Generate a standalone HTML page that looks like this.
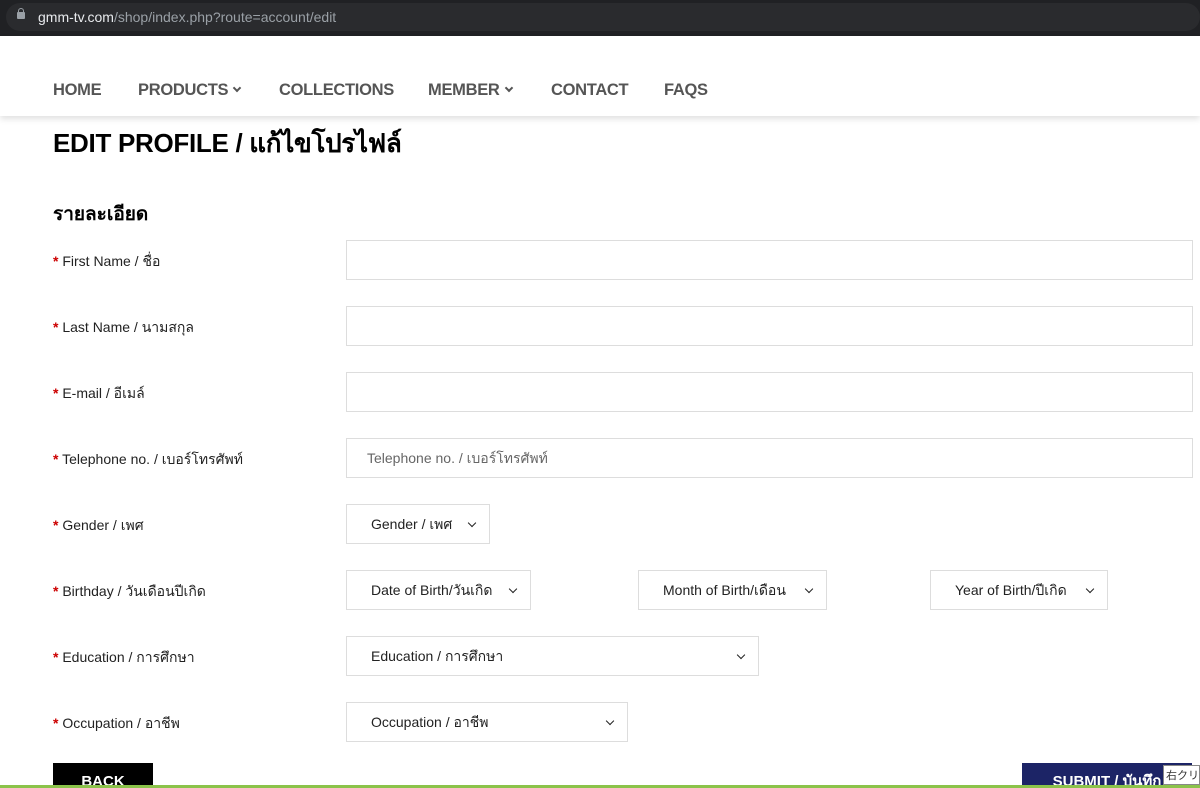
<!DOCTYPE html>
<html><head><meta charset="utf-8"><style>
*{box-sizing:border-box;margin:0;padding:0}
body{width:1200px;height:788px;overflow:hidden;background:#fff;font-family:"Liberation Sans",sans-serif;position:relative;color:#111}
.abs{position:absolute}
.bar{left:0;top:0;width:1200px;height:36px;background:#202124}
.url{left:6px;top:3px;width:1194px;height:28px;background:#2a2b2e;border-radius:14px;color:#9aa0a6;font-size:14px;line-height:28px;padding-left:32px}
.url b{color:#e8eaed;font-weight:normal}
.lock{left:17px;top:12px;width:8px;height:7px;background:#9aa0a6;border-radius:1px}
.lock:before{content:"";position:absolute;left:1px;top:-4px;width:4px;height:4px;border:1px solid #9aa0a6;border-bottom:none;border-radius:3px 3px 0 0}
.nav{left:0;top:36px;width:1200px;height:80px;background:#fff;box-shadow:0 3px 6px rgba(0,0,0,.12)}
.nav span{position:absolute;top:44px;font-size:16.5px;font-weight:bold;color:#555;line-height:20px;letter-spacing:-0.3px}
.chev{display:inline-block;width:6px;height:6px;border-right:2.5px solid #555;border-bottom:2.5px solid #555;transform:rotate(45deg);margin-left:6px;vertical-align:4px}
h1{position:absolute;left:53px;top:123px;font-size:26px;font-weight:bold;color:#000;letter-spacing:-0.3px}
h2{position:absolute;left:53px;top:199px;font-size:19px;font-weight:bold;color:#000}
.lbl{position:absolute;left:53px;font-size:14px;color:#222}
.lbl i{color:#c00;font-style:normal;font-weight:bold}
.inp{position:absolute;height:40px;border:1px solid #ddd;background:#fff;font-size:14px;color:#222;line-height:38px;padding-left:24px}
.sel:after{content:"";position:absolute;right:14px;top:15px;width:5px;height:5px;border-right:1.8px solid #222;border-bottom:1.8px solid #222;transform:rotate(45deg)}
.btn{position:absolute;top:763px;height:25px;color:#fff;font-weight:bold;font-size:15px;text-align:center;line-height:38px;overflow:hidden}
</style></head><body>
<div class="abs bar"></div>
<div class="abs url"><b>gmm-tv.com</b>/shop/index.php?route=account/edit</div>
<div class="abs lock"></div>
<div class="abs nav">
<span style="left:53px">HOME</span>
<span style="left:138px">PRODUCTS<i class="chev"></i></span>
<span style="left:279px">COLLECTIONS</span>
<span style="left:428px">MEMBER<i class="chev"></i></span>
<span style="left:551px">CONTACT</span>
<span style="left:664px">FAQS</span>
</div>
<h1>EDIT PROFILE / แก้ไขโปรไฟล์</h1>
<h2>รายละเอียด</h2>
<div class="lbl" style="top:251px"><i>*</i> First Name / ชื่อ</div>
<div class="lbl" style="top:317px"><i>*</i> Last Name / นามสกุล</div>
<div class="lbl" style="top:383px"><i>*</i> E-mail / อีเมล์</div>
<div class="lbl" style="top:449px"><i>*</i> Telephone no. / เบอร์โทรศัพท์</div>
<div class="lbl" style="top:515px"><i>*</i> Gender / เพศ</div>
<div class="lbl" style="top:581px"><i>*</i> Birthday / วันเดือนปีเกิด</div>
<div class="lbl" style="top:647px"><i>*</i> Education / การศึกษา</div>
<div class="lbl" style="top:713px"><i>*</i> Occupation / อาชีพ</div>
<div class="inp" style="left:346px;top:240px;width:847px"></div>
<div class="inp" style="left:346px;top:306px;width:847px"></div>
<div class="inp" style="left:346px;top:372px;width:847px"></div>
<div class="inp" style="left:346px;top:438px;width:847px;color:#666;padding-left:20px">Telephone no. / เบอร์โทรศัพท์</div>
<div class="inp sel" style="left:346px;top:504px;width:144px">Gender / เพศ</div>
<div class="inp sel" style="left:346px;top:570px;width:185px">Date of Birth/วันเกิด</div>
<div class="inp sel" style="left:638px;top:570px;width:189px">Month of Birth/เดือน</div>
<div class="inp sel" style="left:930px;top:570px;width:178px">Year of Birth/ปีเกิด</div>
<div class="inp sel" style="left:346px;top:636px;width:413px">Education / การศึกษา</div>
<div class="inp sel" style="left:346px;top:702px;width:282px">Occupation / อาชีพ</div>
<div class="btn" style="left:53px;width:100px;background:#000">BACK</div>
<div class="btn" style="left:1022px;width:170px;background:#1c2466">SUBMIT / บันทึก</div>
<div class="abs" style="left:1163px;top:765px;width:37px;height:20px;background:#fff;border:1px solid #888;font-size:11px;line-height:18px;padding-left:2px;font-family:'Noto Sans CJK JP',sans-serif;color:#333;white-space:nowrap;overflow:hidden">右クリック</div>
<div class="abs" style="left:0;top:785px;width:1200px;height:3px;background:#8bc34a"></div>
</body></html>
